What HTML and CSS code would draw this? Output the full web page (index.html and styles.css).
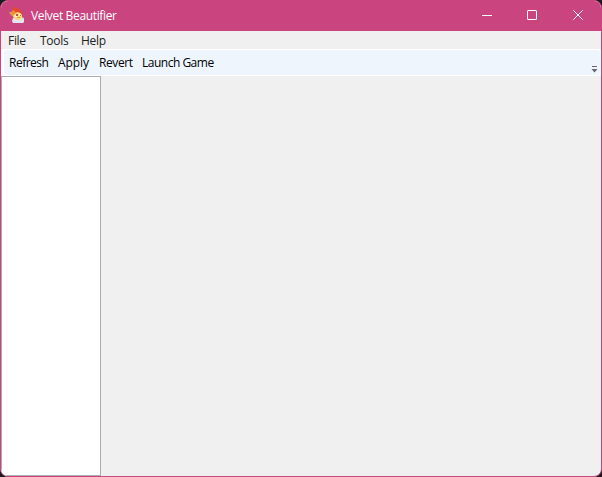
FILE: index.html
```html
<!DOCTYPE html>
<html lang="en">
<head>
<meta charset="utf-8">
<title>Velvet Beautifier</title>
<link rel="stylesheet" href="styles.css">
</head>
<body>
<div class="window">
  <header class="titlebar">
    <svg class="app-icon" width="16" height="16" viewBox="0 0 16 16">
      <path d="M4 11h9l1-1 1 2v3l-1 1H4l-1-2z" fill="#e4e6ed"/>
      <path d="M0 5h3l3 1v4L3 9 1 7z" fill="#d9a045"/>
      <path d="M5 6l3-2 3 1 2 3v3l-3 2H7l-3-3z" fill="#f6d97d"/>
      <path d="M4 0l4 1 3 2 2 4-4-2-3 1-3 1 1-3-1-2z" fill="#e5482c"/>
      <path d="M3 3l3 1 1 2-3 2-1-1z" fill="#ef8a35"/>
      <path d="M6 8h2v2H6zM10 7h2v2h-2z" fill="#fff6d2"/>
      <path d="M7 7h2v2H7zM11 8h1v1h-1z" fill="#c94f35"/>
      <path d="M8 10h3v1H8z" fill="#e89a45"/>
    </svg>
    <h1 class="title">Velvet Beautifier</h1>
    <div class="controls">
      <svg class="control" width="46" height="30" viewBox="0 0 46 30"><path d="M18 15.5h10"/></svg>
      <svg class="control" width="46" height="30" viewBox="0 0 46 30"><rect x="17.5" y="10.5" width="9" height="9" rx="0.5"/></svg>
      <svg class="control" width="46" height="30" viewBox="0 0 46 30"><path d="M17.3 10.3l9.4 9.4M26.7 10.3l-9.4 9.4"/></svg>
    </div>
  </header>
  <nav class="menu">
    <span class="file">File</span><span class="tools">Tools</span><span class="help">Help</span>
  </nav>
  <div class="tray">
    <div class="toolbar">
      <span class="refresh">Refresh</span><span class="apply">Apply</span><span class="revert">Revert</span><span class="launch">Launch Game</span>
      <svg class="overflow" width="7" height="7" viewBox="0 0 7 7"><path d="M1 0h5v1H1z"/><path d="M0.5 3h6L3.5 6.4z"/></svg>
    </div>
  </div>
  <main class="content"><div class="list"></div></main>
</div>
</body>
</html>
```
FILE: styles.css
```css
* { box-sizing: border-box; }
body {
  margin: 0;
  background: #1c1c20;
  font: 12px/16px "Open Sans", "Noto Sans", sans-serif;
  color: #000;
}
.window {
  width: 602px;
  height: 477px;
  display: flex;
  flex-direction: column;
  border: 1px solid #ca457f;
  border-radius: 8px;
  background: #f0f0f0;
  overflow: hidden;
}
.titlebar {
  height: 30px;
  flex: none;
  display: flex;
  background: #ca457f;
  color: #fff;
}
.app-icon { margin: 6px 6px 0 8px; }
.title {
  margin: 7px 0 0;
  font-size: 12px;
  font-weight: 400;
  letter-spacing: -0.35px;
  white-space: nowrap;
}
.controls { display: flex; margin: -1px -1px 0 auto; }
.control { fill: none; stroke: #fff; stroke-width: 1; }
.menu {
  height: 18px;
  flex: none;
  display: flex;
  padding: 2px 0 0 7px;
  color: #212121;
  letter-spacing: -0.3px;
}
.file { width: 32px; }
.tools { width: 41px; }
.tray {
  height: 27px;
  flex: none;
  padding: 1px 1px 1px 3px;
  background: #fff;
}
.toolbar {
  height: 25px;
  display: flex;
  padding: 5px 2px 0 5px;
  border-radius: 3px;
  background: #eef5fd;
  letter-spacing: -0.5px;
  white-space: nowrap;
}
.refresh { width: 49px; }
.apply { width: 41px; letter-spacing: -0.1px; }
.revert { width: 43px; letter-spacing: -0.4px; }
.overflow { margin: 11px 0 0 auto; fill: #666; }
.content { flex: 1; display: flex; }
.list {
  width: 100px;
  border: 1px solid #abadb3;
  background: #fff;
}
```
